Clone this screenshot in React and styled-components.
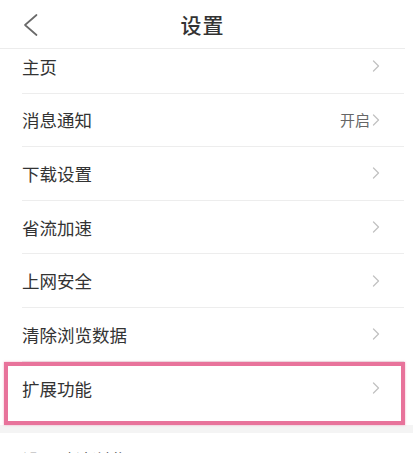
import React from "react";
import styled, { createGlobalStyle } from "styled-components";

const GlobalStyle = createGlobalStyle`
  html, body {
    margin: 0;
    padding: 0;
    background: #ffffff;
  }
  body {
    font-family: "Noto Sans CJK SC", "Noto Sans", sans-serif;
    color: #333333;
  }
`;

const groups = [
  [
    { title: "主页" },
    { title: "消息通知", value: "开启" },
    { title: "下载设置" },
    { title: "省流加速" },
    { title: "上网安全" },
    { title: "清除浏览数据" },
    { title: "扩展功能", highlight: true },
  ],
  [{ title: "设置默认浏览器" }],
];

const ChevronRight = () => (
  <svg width="8" height="12" viewBox="0 0 8 12">
    <polyline
      points="1.5,1 6.5,6 1.5,11"
      fill="none"
      stroke="#c2c2c2"
      strokeWidth="1.3"
      strokeLinecap="round"
      strokeLinejoin="round"
    />
  </svg>
);

const BackArrow = () => (
  <svg width="16" height="24" viewBox="0 0 16 24">
    <polyline
      points="13.5,2 2,12 13.5,22"
      fill="none"
      stroke="#6a6a6a"
      strokeWidth="1.7"
      strokeLinecap="round"
      strokeLinejoin="round"
    />
  </svg>
);

const App = () => {
  return (
    <>
      <GlobalStyle />
      <Page>
        <Header>
          <BackButton>
            <BackArrow />
          </BackButton>
          <Title>设置</Title>
        </Header>
        <Viewport>
          <List>
            {groups.map((items, gi) => (
              <Group key={gi} last={gi === groups.length - 1}>
                {items.map((item) => (
                  <Row key={item.title} last={item.highlight}>
                    <Label>{item.title}</Label>
                    <Right>
                      {item.value && <Value>{item.value}</Value>}
                      <ChevronRight />
                    </Right>
                    {item.highlight && <Highlight />}
                  </Row>
                ))}
              </Group>
            ))}
          </List>
        </Viewport>
      </Page>
    </>
  );
};

const Page = styled.div`
  width: 413px;
  height: 453px;
  display: flex;
  flex-direction: column;
  overflow: hidden;
  background: #ffffff;
`;

const Header = styled.div`
  height: 48px;
  flex-shrink: 0;
  margin-right: 8px;
  display: flex;
  align-items: center;
  justify-content: center;
  position: relative;
  border-bottom: 1px solid #ececec;
  background: #ffffff;
  z-index: 1;
`;

const BackButton = styled.div`
  position: absolute;
  left: 23px;
  top: 13px;
  display: flex;
`;

const Title = styled.h1`
  margin: 0;
  font-size: 21px;
  font-weight: 500;
  color: #333333;
  letter-spacing: 1px;
`;

const Viewport = styled.div`
  flex: 1;
  overflow: hidden;
`;

/* list is scrolled up a little, so the first row is partly under the header */
const List = styled.div`
  margin-top: -9px;
  display: flex;
  flex-direction: column;
`;

const Group = styled.div`
  background: #ffffff;
  padding-bottom: ${(p) => (p.last ? "0" : "10px")};
  border-bottom: ${(p) => (p.last ? "none" : "8px solid #f4f4f4")};
`;

const Row = styled.div`
  position: relative;
  box-sizing: border-box;
  height: 53.6px;
  margin: 0 9px 0 22px;
  padding-right: 24px;
  display: flex;
  align-items: center;
  justify-content: space-between;
  border-bottom: ${(p) => (p.last ? "none" : "1px solid #ededed")};
`;

const Label = styled.span`
  font-size: 17.5px;
  color: #333333;
`;

const Right = styled.div`
  display: flex;
  align-items: center;
  gap: 2px;
`;

const Value = styled.span`
  font-size: 15px;
  color: #666666;
`;

const Highlight = styled.div`
  position: absolute;
  top: 0;
  bottom: -10px;
  left: -18px;
  right: -1px;
  border: 4.5px solid #e8739b;
  box-shadow: 0 0 2px rgba(232, 115, 155, 0.6);
  pointer-events: none;
`;

export default App;
